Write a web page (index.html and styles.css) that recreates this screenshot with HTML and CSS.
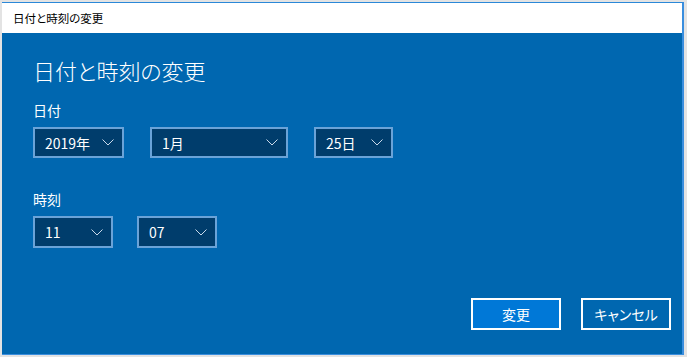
FILE: index.html
```html
<!DOCTYPE html>
<html lang="ja">
<head>
<meta charset="utf-8">
<title>日付と時刻の変更</title>
<link rel="stylesheet" href="styles.css">
</head>
<body>
<div class="window">
  <div class="titlebar">日付と時刻の変更</div>
  <div class="content">
    <h1 class="heading">日付と時刻の変更</h1>
    <div class="label label-date">日付</div>
    <div class="row row-date">
      <div class="select w-year"><span>2019年</span><svg class="chev" width="12" height="7" viewBox="0 0 12 7"><polyline points="0.5,0.5 6,6 11.5,0.5"/></svg></div>
      <div class="select w-month"><span>1月</span><svg class="chev" width="12" height="7" viewBox="0 0 12 7"><polyline points="0.5,0.5 6,6 11.5,0.5"/></svg></div>
      <div class="select w-day"><span>25日</span><svg class="chev" width="12" height="7" viewBox="0 0 12 7"><polyline points="0.5,0.5 6,6 11.5,0.5"/></svg></div>
    </div>
    <div class="label label-time">時刻</div>
    <div class="row row-time">
      <div class="select w-time"><span>11</span><svg class="chev" width="12" height="7" viewBox="0 0 12 7"><polyline points="0.5,0.5 6,6 11.5,0.5"/></svg></div>
      <div class="select w-time"><span>07</span><svg class="chev" width="12" height="7" viewBox="0 0 12 7"><polyline points="0.5,0.5 6,6 11.5,0.5"/></svg></div>
    </div>
    <div class="buttons">
      <button class="btn btn-primary">変更</button>
      <button class="btn">キャンセル</button>
    </div>
  </div>
</div>
</body>
</html>
```

FILE: styles.css
```css
html, body {
  margin: 0;
  padding: 0;
}
body {
  background: #e3e3e3;
  width: 687px;
  height: 357px;
  overflow: hidden;
  font-family: "Noto Sans CJK JP", "Noto Sans", sans-serif;
  font-feature-settings: "palt" 1;
}
.window {
  box-sizing: border-box;
  margin: 2px 0 0 2px;
  width: 682px;
  height: 353px;
  border-top: 1px solid #2b88d8;
  border-right: 2px solid #3a8ede;
  border-bottom: 1px solid #3a8ede;
  display: flex;
  flex-direction: column;
}
.titlebar {
  height: 30px;
  background: #ffffff;
  color: #000;
  font-size: 11.5px;
  line-height: 30px;
  padding-left: 11px;
}
.content {
  flex: 1;
  background: #0067b0;
  color: #fff;
  padding: 26px 11px 0 31px;
  display: flex;
  flex-direction: column;
}
.heading {
  margin: 0;
  font-size: 22px;
  line-height: 22px;
  font-weight: 300;
  letter-spacing: 0;
}
.label {
  font-size: 14px;
  line-height: 14px;
}
.label-date { margin-top: 22px; }
.label-time { margin-top: 34px; }
.row {
  display: flex;
  margin-top: 10px;
}
.row-date { gap: 26px; }
.row-date .select { height: 31px; }
.row-time { gap: 24px; }
.row-time .select { height: 32px; }
.select {
  box-sizing: border-box;
  background: #003d6c;
  border: 2px solid #6aa3d8;
  display: flex;
  align-items: center;
  justify-content: space-between;
  padding: 0 8px 0 10px;
  font-size: 14px;
  color: #fff;
}
.w-year { width: 91px; }
.w-month { width: 138px; }
.w-day { width: 79px; }
.w-time { width: 80px; }
.chev polyline {
  fill: none;
  stroke: #c9d9ea;
  stroke-width: 1;
}
.buttons {
  display: flex;
  justify-content: flex-end;
  gap: 20px;
  margin-top: 50px;
}
.btn {
  box-sizing: border-box;
  width: 90px;
  height: 32px;
  border: 2px solid #ffffff;
  background: transparent;
  color: #fff;
  font-family: "Noto Sans CJK JP", "Noto Sans", sans-serif;
  font-feature-settings: "palt" 1;
  font-size: 14px;
  padding: 0;
}
.btn-primary {
  background: #0078d7;
}
```
